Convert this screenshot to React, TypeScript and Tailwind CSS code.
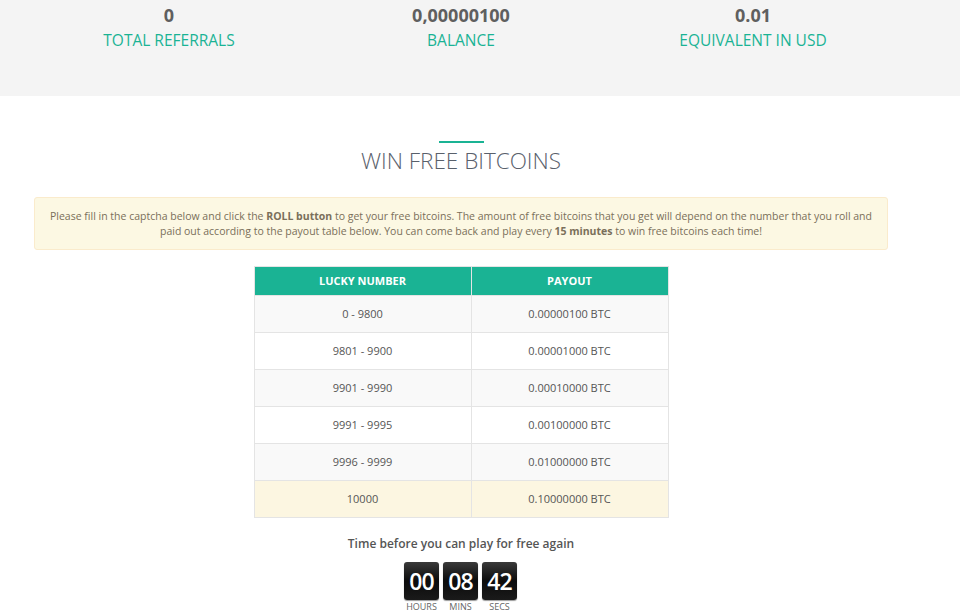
import React from "react";

const rows = [
  ["0 - 9800", "0.00000100 BTC"],
  ["9801 - 9900", "0.00001000 BTC"],
  ["9901 - 9990", "0.00010000 BTC"],
  ["9991 - 9995", "0.00100000 BTC"],
  ["9996 - 9999", "0.01000000 BTC"],
  ["10000", "0.10000000 BTC"],
];

function Stat({ value, label }: { value: string; label: string }) {
  return (
    <div className="flex flex-col items-center">
      <div className="text-[18px] leading-[24px] font-bold text-[#5f5f5f]">{value}</div>
      <div className="text-[15.5px] leading-[24px] text-[#1ab394] mt-[1px]">{label}</div>
    </div>
  );
}

function Box({ v, label }: { v: string; label: string }) {
  return (
    <div className="flex flex-col items-center">
      <div className="w-[35px] h-[38px] rounded-[3px] bg-gradient-to-b from-[#3a3a3a] via-[#0c0c0c] to-[#1a1a1a] flex items-center justify-center text-white text-[23px] leading-none font-semibold shadow-[0_1px_1px_rgba(0,0,0,0.4)] tracking-[-1px]">
        {v}
      </div>
      <div className="text-[9px] leading-[10px] text-[#666] mt-[2px]">{label}</div>
    </div>
  );
}

export default function App() {
  return (
    <div className="w-[960px] h-[612px] overflow-hidden bg-white" style={{ fontFamily: '"Open Sans", sans-serif' }}>
      <div className="bg-[#f4f4f4] h-[96px] pt-[3px]">
        <div className="ml-[23px] w-[876px] grid grid-cols-3">
          <Stat value="0" label="TOTAL REFERRALS" />
          <Stat value="0,00000100" label="BALANCE" />
          <Stat value="0.01" label="EQUIVALENT IN USD" />
        </div>
      </div>
      <div className="w-[922px] flex flex-col items-center">
        <div className="mt-[45px] w-[45px] h-[2px] bg-[#1ab394]" />
        <h1 className="mt-[3px] text-[22.5px] leading-[30px] font-light text-[#59606b]">WIN FREE BITCOINS</h1>
        <div className="mt-[21px] w-[854px] h-[53px] bg-[#fcf8e3] border border-[#faebcc] rounded-[3px] flex items-center justify-center px-[10px]">
          <p className="text-[10.5px] leading-[15px] text-[#7a6f5a] text-center">
            Please fill in the captcha below and click the <b>ROLL button</b> to get your free bitcoins. The amount of free bitcoins that you get will depend on the number that you roll and paid out according to the payout table below. You can come back and play every <b>15 minutes</b> to win free bitcoins each time!
          </p>
        </div>
        <table className="mt-[16px] w-[415px] border-collapse text-[11px] text-[#555]">
          <thead>
            <tr className="bg-[#1ab394] text-white h-[29px]">
              <th className="w-[217px] font-bold border border-[#e4e4e4]">LUCKY NUMBER</th>
              <th className="font-bold border border-[#e4e4e4]">PAYOUT</th>
            </tr>
          </thead>
          <tbody>
            {rows.map((r, i) => (
              <tr
                key={i}
                className={
                  "h-[37px] " +
                  (i === 5 ? "bg-[#fcf6e1]" : i % 2 === 0 ? "bg-[#f9f9f9]" : "bg-white")
                }
              >
                <td className="text-center border border-[#e4e4e4]">{r[0]}</td>
                <td className="text-center border border-[#e4e4e4]">{r[1]}</td>
              </tr>
            ))}
          </tbody>
        </table>
        <div className="mt-[18px] text-[12px] leading-[16px] font-semibold text-[#555]">
          Time before you can play for free again
        </div>
        <div className="mt-[10px] flex gap-[4px] ml-[-1px]">
          <Box v="00" label="HOURS" />
          <Box v="08" label="MINS" />
          <Box v="42" label="SECS" />
        </div>
      </div>
    </div>
  );
}
